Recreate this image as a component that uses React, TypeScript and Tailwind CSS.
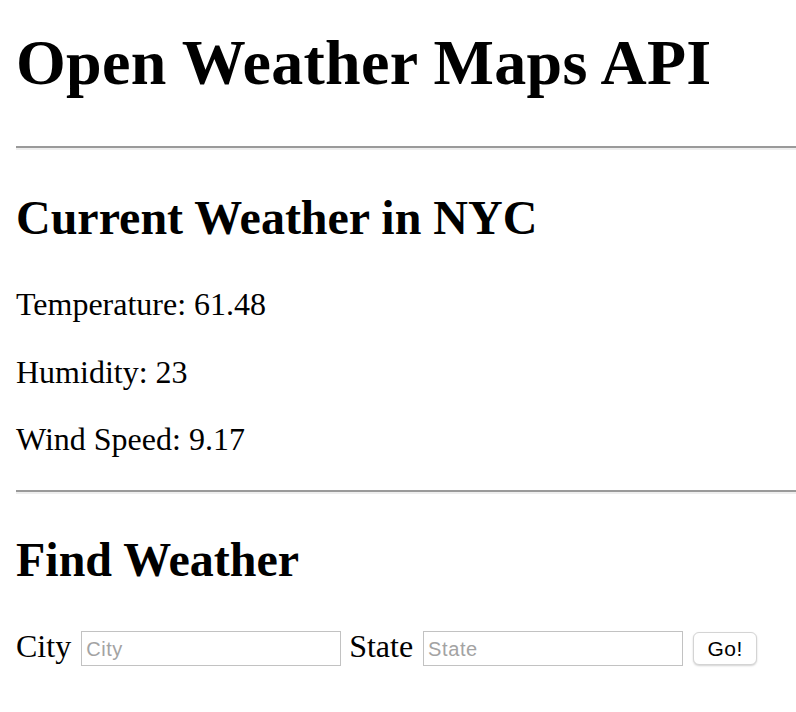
import React from "react";

export default function App() {
  return (
    <div className="min-h-screen bg-white text-black font-['Liberation_Serif','Times_New_Roman',serif] pl-[16px] pt-[27px] overflow-hidden">
      <h1 className="text-[64px] leading-[72px] font-bold tracking-[0.3px] whitespace-nowrap">Open Weather Maps API</h1>
      <hr className="mt-[47px] h-0 border-0 border-t-[2px] border-t-[#9a9a9a] border-b-[2px] border-b-[#eeeeee]" />
      <h2 className="mt-[41px] text-[48px] leading-[54px] font-bold whitespace-nowrap">Current Weather in NYC</h2>
      <p className="mt-[41px] text-[32px] leading-[36px]">Temperature: 61.48</p>
      <p className="mt-[31.5px] text-[32px] leading-[36px]">Humidity: 23</p>
      <p className="mt-[31.5px] text-[32px] leading-[36px]">Wind Speed: 9.17</p>
      <hr className="mt-[32.5px] h-0 border-0 border-t-[2px] border-t-[#9a9a9a] border-b-[2px] border-b-[#eeeeee]" />
      <h2 className="mt-[39px] text-[48px] leading-[54px] font-bold whitespace-nowrap">Find Weather</h2>
      <form className="mt-[41px] flex items-start" onSubmit={(e) => e.preventDefault()}>
        <label className="text-[32px] leading-[36px]">City</label>
        <input
          placeholder="City"
          className="ml-[10px] mt-[3px] w-[260px] h-[35px] border border-[#c2c2c2] bg-white px-[4px] pt-[3px] font-['Liberation_Sans',Arial,sans-serif] text-[20px] tracking-[0.6px] text-black placeholder:text-[#a3a3a3] outline-none"
        />
        <label className="ml-[8px] text-[32px] leading-[36px]">State</label>
        <input
          placeholder="State"
          className="ml-[10px] mt-[3px] w-[260px] h-[35px] border border-[#c2c2c2] bg-white px-[4px] pt-[3px] font-['Liberation_Sans',Arial,sans-serif] text-[20px] tracking-[0.6px] text-black placeholder:text-[#a3a3a3] outline-none"
        />
        <button
          type="submit"
          className="ml-[10px] mt-[4px] w-[64px] h-[33px] rounded-[6px] border border-[#d4d4d4] bg-white shadow-[0_1px_2px_rgba(0,0,0,0.18)] font-['Liberation_Sans',Arial,sans-serif] text-[21px] tracking-[0.5px] leading-none text-black"
        >
          Go!
        </button>
      </form>
    </div>
  );
}
